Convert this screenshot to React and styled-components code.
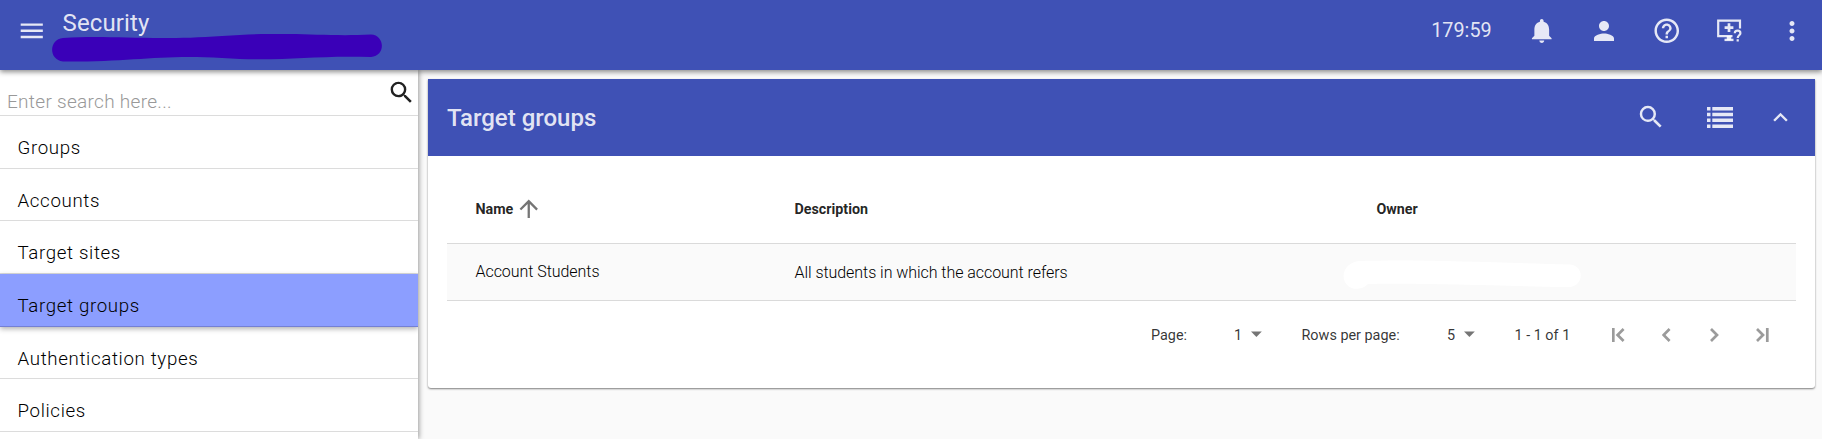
import React from "react";
import styled, { createGlobalStyle } from "styled-components";
import {
  MdMenu, MdNotifications, MdPerson, MdHelpOutline, MdMoreVert, MdSearch,
  MdExpandLess, MdArrowUpward,
} from "react-icons/md";

const Global = createGlobalStyle`
  * { box-sizing: border-box; }
  html, body { margin: 0; height: 100%; overflow: hidden; background: #fafafa; }
  body { font-family: Roboto, "Liberation Sans", sans-serif; color: rgba(0,0,0,.87); }
  svg { display: block; flex: none; }
`;
const Page = styled.div`
  height: 439px;
  display: flex;
  flex-direction: column;
  overflow: hidden;
`;
const TopBar = styled.header`
  height: 70px;
  flex: none;
  display: flex;
  background: #3f51b5;
  color: rgba(255,255,255,.87);
  box-shadow: 0 2px 5px rgba(0,0,0,.45);
  position: relative;
  z-index: 3;
`;
const MenuButton = styled.div`
  padding: 16px 0 0 17px;
  width: 52px;
`;
const TitleBlock = styled.div`
  flex: 1;
  display: flex;
  flex-direction: column;
`;
const AppTitle = styled.div`
  font-size: 24px;
  line-height: 28px;
  padding: 9px 0 0 10.6px;
  height: 34px;
  letter-spacing: .1px;
`;
const Actions = styled.div`
  display: flex;
  align-items: center;
  height: 61px;
  padding-right: 15px;
`;
const Timer = styled.span`
  font-size: 19.8px;
  line-height: 24px;
  margin-right: 35px;
`;
const ActionIcon = styled.span`
  width: 30px;
  display: flex;
  justify-content: center;
  margin-left: ${(p) => p.$gap ?? 32.6}px;
`;
const Body = styled.div`
  flex: 1;
  min-height: 0;
  display: flex;
`;
const Sidebar = styled.nav`
  width: 418px;
  flex: none;
  background: #fff;
  box-shadow: 1px 0 5px rgba(0,0,0,.4);
  overflow: hidden;
`;
const SearchRow = styled.div`
  height: 46px;
  border-bottom: 1px solid #dcdcdc;
  display: flex;
  justify-content: space-between;
  padding: 8px 2px 0 7px;
  color: #212121;
`;
const Placeholder = styled.span`
  color: #999;
  font-size: 19px;
  font-weight: 300;
  line-height: 22px;
  padding-top: 13px;
  letter-spacing: .3px;
`;
const NavItem = styled.div`
  height: 52.65px;
  padding: 21px 0 0 17.5px;
  font-size: 18.7px;
  font-weight: 300;
  color: #000;
  line-height: 22px;
  letter-spacing: .65px;
  border-bottom: 1px solid ${(p) => (p.$active ? "#7480d4" : "#dcdcdc")};
  background: ${(p) => (p.$active ? "#8c9eff" : "transparent")};
  box-shadow: ${(p) => (p.$active ? "0 2px 5px rgba(0,0,0,.3)" : "none")};
`;
const Main = styled.main`
  flex: 1;
  padding: 9px 7px 0 10px;
`;
const Card = styled.section`
  height: 309px;
  background: #fff;
  border-radius: 0 0 3px 3px;
  box-shadow: 0 1px 2px rgba(0,0,0,.5);
`;
const CardHeader = styled.div`
  height: 77px;
  background: #3f51b5;
  color: rgba(255,255,255,.87);
  display: flex;
  align-items: center;
  padding: 0 20px 0 19px;
`;
const CardTitle = styled.h2`
  flex: 1;
  margin: 0;
  font-size: 24px;
  font-weight: 500;
  line-height: 28px;
`;
const CardTool = styled.span`
  margin-left: ${(p) => p.$gap || 0}px;
  padding-bottom: ${(p) => p.$lift || 0}px;
`;
const Table = styled.div`
  margin: 0 19px;
`;
const Row = styled.div`
  display: grid;
  grid-template-columns: 319px 582px 1fr;
  padding-left: 28.5px;
`;
const HeadRow = styled(Row)`
  height: 88px;
  padding-top: 18px;
  align-items: center;
  border-bottom: 1px solid #dadada;
  font-size: 14.3px;
  font-weight: 700;
`;
const DataRow = styled(Row)`
  height: 57px;
  align-items: center;
  background: #fafafa;
  border-bottom: 1px solid #dadada;
  font-size: 16px;
  font-weight: 300;
  letter-spacing: -.05px;
  color: #000;
`;
const HeadCell = styled.div`
  display: flex;
  align-items: center;
  gap: 1.5px;
  height: 28px;
  svg { color: #757575; }
`;
const Cell = styled.div`
  line-height: 20px;
  padding-top: ${(p) => p.$drop || 0}px;
  margin-left: ${(p) => p.$outdent || 0}px;
`;
const Pager = styled.div`
  display: flex;
  align-items: center;
  height: 68px;
  padding-left: 704px;
  font-size: 14.4px;
  color: rgba(0,0,0,.8);
`;
const PagerText = styled.span`
  width: ${(p) => p.$w}px;
  white-space: nowrap;
`;
const Select = styled.span`
  display: flex;
  align-items: center;
  width: 67.5px;
  gap: 9px;
`;
const PageButton = styled.span`
  width: 48px;
  display: flex;
  justify-content: center;
`;

const NAV = ["Groups", "Accounts", "Target sites", "Target groups", "Authentication types", "Policies", ""];

const HeaderMask = () => (
  <svg width="340" height="30" viewBox="0 0 340 30">
    <path d="M11 4C60 1 100 7 170 2S270 3 319 0.5C333 1 334 22 319 23C260 21 230 28 170 24S80 28 11 27.5C-4 26-3 5 11 4Z" fill="#3a00b8" />
  </svg>
);
const OwnerMask = () => (
  <svg width="245" height="30" viewBox="0 0 245 30">
    <path d="M16 1C80 -1 160 3 227 4.5C242 6 241 26 226 27C150 26 90 23 25 24C16 33 1 29 0.5 16C1 7 8 2 16 1Z" fill="#fff" />
  </svg>
);
const RemoteHelpIcon = () => (
  <svg width="26" height="23" viewBox="-1 0 26 23" fill="none" stroke="currentColor" strokeWidth="2.2">
    <path d="M15.5 17.2H1.2V1.6H23V9.5" />
    <path d="M12 4.2V13M7.6 8.6H16.4" strokeWidth="2.7" />
    <path d="M7.5 20.9H16.5" strokeWidth="2.4" />
    <path d="M12 17V21" strokeWidth="4.5" />
    <path d="M17.8 14.2C17.8 10.8 23.4 10.8 23.4 14.2C23.4 16.3 20.7 16.3 20.7 19M20.7 20.2V22.4" />
  </svg>
);
const ListIcon = () => (
  <svg width="26" height="21" viewBox="0 0 26 21" fill="currentColor">
    <path d="M0 0h3.5v3.5H0zM5.3 0H26v3.5H5.3zM0 5.8h3.5v3.5H0zM5.3 5.8H26v3.5H5.3zM0 11.6h3.5v3.5H0zM5.3 11.6H26v3.5H5.3zM0 17.4h3.5v3.5H0zM5.3 17.4H26v3.5H5.3z" />
  </svg>
);
const Caret = () => (
  <svg width="11" height="12" viewBox="0 0 11 12" fill="#757575">
    <path d="M0 2.4h10.8L5.4 8z" />
  </svg>
);
const PageIcon = ({ d, width = 8.6 }) => (
  <svg width={width} height="14" viewBox={`0 0 ${width} 14`} fill="none" stroke="#9b9b9b" strokeWidth="2.7">
    <path d={d} />
  </svg>
);

export default function App() {
  return (
    <Page>
      <Global />
      <TopBar>
        <MenuButton><MdMenu size={29.5} /></MenuButton>
        <TitleBlock>
          <AppTitle>Security</AppTitle>
          <HeaderMask />
        </TitleBlock>
        <Actions>
          <Timer>179:59</Timer>
          <ActionIcon $gap={0}><MdNotifications size={29.5} /></ActionIcon>
          <ActionIcon><MdPerson size={30} /></ActionIcon>
          <ActionIcon><MdHelpOutline size={29.5} /></ActionIcon>
          <ActionIcon><RemoteHelpIcon /></ActionIcon>
          <ActionIcon><MdMoreVert size={30} /></ActionIcon>
        </Actions>
      </TopBar>
      <Body>
        <Sidebar>
          <SearchRow>
            <Placeholder>Enter search here...</Placeholder>
            <MdSearch size={29} />
          </SearchRow>
          {NAV.map((label) => (
            <NavItem key={label} $active={label === "Target groups"}>{label}</NavItem>
          ))}
        </Sidebar>
        <Main>
          <Card>
            <CardHeader>
              <CardTitle>Target groups</CardTitle>
              <CardTool $lift={2}><MdSearch size={30} /></CardTool>
              <CardTool $gap={41} $lift={1}><ListIcon /></CardTool>
              <CardTool $gap={33}><MdExpandLess size={29} /></CardTool>
            </CardHeader>
            <Table>
              <HeadRow>
                <HeadCell>Name<MdArrowUpward size={27.5} /></HeadCell>
                <HeadCell>Description</HeadCell>
                <HeadCell>Owner</HeadCell>
              </HeadRow>
              <DataRow>
                <Cell>Account Students</Cell>
                <Cell $drop={2}>All students in which the account refers</Cell>
                <Cell $drop={6} $outdent={-34}><OwnerMask /></Cell>
              </DataRow>
              <Pager>
                <PagerText $w={83}>Page:</PagerText>
                <Select>1<Caret /></Select>
                <PagerText $w={145.5}>Rows per page:</PagerText>
                <Select>5<Caret /></Select>
                <PagerText $w={80}>1 - 1 of 1</PagerText>
                <PageButton><PageIcon width={12.6} d="M1.3 0V14M11.6 1L5.6 7L11.6 13" /></PageButton>
                <PageButton><PageIcon d="M7.6 1L1.6 7L7.6 13" /></PageButton>
                <PageButton><PageIcon d="M1 1L7 7L1 13" /></PageButton>
                <PageButton><PageIcon width={12.6} d="M1 1L7 7L1 13M11.3 0V14" /></PageButton>
              </Pager>
            </Table>
          </Card>
        </Main>
      </Body>
    </Page>
  );
}
